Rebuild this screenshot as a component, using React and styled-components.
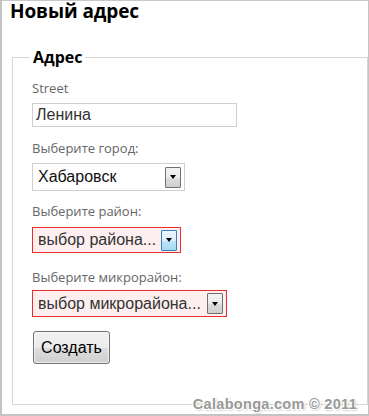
import React from "react";
import styled, { createGlobalStyle } from "styled-components";

const GlobalStyle = createGlobalStyle`
  html, body {
    margin: 0;
    padding: 0;
    background: #fff;
  }
  * {
    box-sizing: border-box;
  }
`;

const Frame = styled.div`
  position: relative;
  width: 369px;
  height: 416px;
  padding-top: 1px;
  background: #fff;
  border-left: 2px solid #c4c4c4;
  border-right: 1px solid #c4c4c4;
  border-bottom: 2px solid #c4c4c4;
  box-shadow: inset 0 1px 0 #c8c8c8;
  font-family: "Open Sans", "Noto Sans", sans-serif;
`;

const Title = styled.h2`
  margin: -2px 0 0;
  padding: 0 0 0 8px;
  font-size: 19px;
  line-height: 24px;
  font-weight: 700;
  letter-spacing: -0.1px;
  color: #000;
`;

const Group = styled.fieldset`
  margin: 23px 0 0 10px;
  padding: 11px 10px 40px 19px;
  border: 1px solid #d6d6d6;
  min-inline-size: 0;
`;

const Legend = styled.legend`
  margin-left: -2px;
  padding: 0 3px;
  font-size: 16px;
  line-height: 22px;
  font-weight: 700;
  color: #000;
`;

const Field = styled.div`
  margin-top: ${({ $top }) => $top || 0}px;
`;

const Label = styled.label`
  display: block;
  font-size: 13px;
  line-height: 18px;
  color: #666;
  margin-bottom: ${({ $mb }) => $mb}px;
`;

const TextInput = styled.input`
  display: block;
  width: 205px;
  height: 24px;
  margin: 0;
  padding: 0 3px;
  border: 1px solid #cfcfcf;
  font-family: "Liberation Sans", Arial, sans-serif;
  font-size: 16px;
  color: #333;
  outline: none;
`;

const SelectBox = styled.div`
  display: flex;
  align-items: center;
  justify-content: space-between;
  width: ${({ $w }) => $w}px;
  height: ${({ $h }) => $h}px;
  padding: 0 3px 0 5px;
  border: 1px solid ${({ $error }) => ($error ? "#ee2a2a" : "#cfcfcf")};
  background: ${({ $error }) => ($error ? "#fdefef" : "#fff")};
  font-family: "Liberation Sans", Arial, sans-serif;
  font-size: 16px;
  color: ${({ $error }) => ($error ? "#333" : "#111")};
`;

const SelectText = styled.span`
  white-space: nowrap;
`;

const Arrow = styled.span`
  display: flex;
  align-items: center;
  justify-content: center;
  width: 16px;
  height: 21px;
  border: 1px solid ${({ $hover }) => ($hover ? "#3c7fb1" : "#707070")};
  border-radius: 1px;
  background: ${({ $hover }) =>
    $hover
      ? "linear-gradient(#eaf6fd, #d9f0fc 50%, #bee6fd 51%, #a7d9f5)"
      : "linear-gradient(#f2f2f2, #ebebeb 50%, #dddddd 51%, #cfcfcf)"};
  &::after {
    content: "";
    border-left: 3.5px solid transparent;
    border-right: 3.5px solid transparent;
    border-top: 4px solid #000;
  }
`;

const Button = styled.button`
  display: block;
  margin: 14px 0 0 1px;
  width: 77px;
  height: 33px;
  padding: 0;
  border: 1px solid #707070;
  border-radius: 3px;
  background: linear-gradient(#f2f2f2, #ebebeb 50%, #dddddd 51%, #cfcfcf);
  box-shadow: inset 0 0 0 1px rgba(255, 255, 255, 0.6);
  font-family: "Liberation Sans", Arial, sans-serif;
  font-size: 16px;
  color: #000;
`;

const Watermark = styled.div`
  position: absolute;
  right: 11px;
  bottom: 2px;
  font-family: "Liberation Sans", Arial, sans-serif;
  font-size: 14.5px;
  font-weight: 700;
  letter-spacing: 0.3px;
  color: #999;
  text-shadow: 1px 1px 0 #fff, -1px -1px 0 #fff, 1px -1px 0 #fff,
    -1px 1px 0 #fff, 1px 1px 2px #777;
`;

const Select = ({ text, w, h, error, hover }) => (
  <SelectBox $w={w} $h={h} $error={error}>
    <SelectText>{text}</SelectText>
    <Arrow $hover={hover} />
  </SelectBox>
);

const App = () => {
  return (
    <Frame>
      <GlobalStyle />
      <Title>Новый адрес</Title>
      <Group>
        <Legend>Адрес</Legend>
        <Field>
          <Label $mb={6}>Street</Label>
          <TextInput defaultValue="Ленина" />
        </Field>
        <Field $top={12}>
          <Label $mb={6}>Выберите город:</Label>
          <Select text="Хабаровск" w={153} h={28} />
        </Field>
        <Field $top={11}>
          <Label $mb={7}>Выберите район:</Label>
          <Select text="выбор района..." w={149} h={26} error hover />
        </Field>
        <Field $top={15}>
          <Label $mb={4}>Выберите микрорайон:</Label>
          <Select text="выбор микрорайона..." w={195} h={27} error />
        </Field>
        <Button>Создать</Button>
      </Group>
      <Watermark>Calabonga.com © 2011</Watermark>
    </Frame>
  );
};

export default App;
